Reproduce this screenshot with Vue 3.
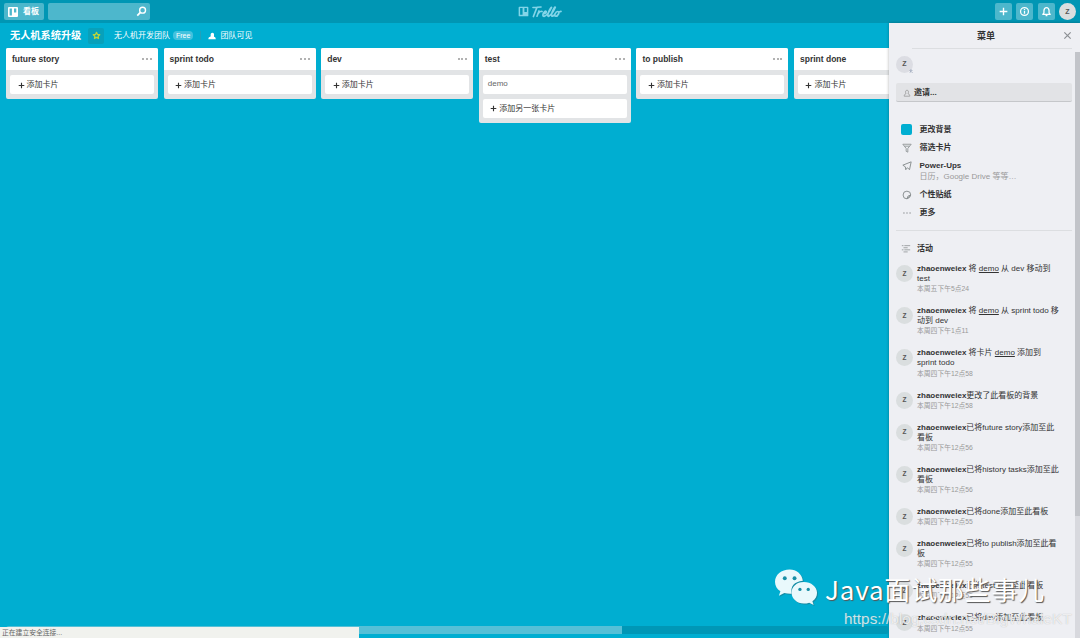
<template>
  <div class="app">
    <header class="topbar">
      <div class="boards-btn">
        <svg class="board-icon" viewBox="0 0 12 12">
          <path fill-rule="evenodd" fill="#fff" d="M2 1h8a1 1 0 0 1 1 1v8a1 1 0 0 1-1 1H2a1 1 0 0 1-1-1V2a1 1 0 0 1 1-1zM2.6 2.5v7h2.300v-7zM7 2.500v4h2.300v-4z" />
        </svg>
        <span>看板</span>
      </div>
      <div class="search">
        <svg viewBox="0 0 12 12" fill="none" stroke="#fff" stroke-width="1.5">
          <circle cx="7.2" cy="4.6" r="3.2" />
          <path d="M4.8 7 1.4 10.5" stroke-width="1.9" />
        </svg>
      </div>
      <div class="logo">
        <svg viewBox="0 0 12 12">
          <path fill-rule="evenodd" fill="#82d5e8" d="M1.5.7h9a.8.8 0 0 1 .8.8v9a.8.8 0 0 1-.8.8h-9a.8.8 0 0 1-.8-.8v-9a.8.8 0 0 1 .8-.8zM2.300 2.200v7.400h2.700V2.200zM7 2.200v4.400h2.700V2.200z" />
        </svg>
        <svg class="wordmark" viewBox="0 0 32 14" fill="none" stroke="#82d5e8" stroke-width="1.7" stroke-linecap="round" stroke-linejoin="round">
          <path d="M3 2.5 11 2M7 2.3 3.4 11.5M9 6 7 11.2M8.2 8.5Q10.5 5.5 12 6.5M13 9Q17 8 16 6.3C14.5 5 11.2 11.5 14 11.4Q18 10 21.5 2.5C21 1.5 15.7 11.4 18.7 11.3Q22.5 9 25.3 2.2C24.5 1 19.5 11.3 22.5 11.2Q24 11 25 9C26.5 5.3 30 6 28.5 9C27 12 24 12 25 9M28.8 7 31 6.4" />
        </svg>
      </div>
      <div class="actions">
        <span class="action">
          <svg viewBox="0 0 12 12" fill="none" stroke="#fff" stroke-width="1.5"><path d="M6 1.8v8.4M1.8 6h8.4" /></svg>
        </span>
        <span class="action">
          <svg viewBox="0 0 12 12" fill="none" stroke="#fff" stroke-width="1.4"><circle cx="6" cy="6" r="4.3" /><path d="M6 5.4v3M6 3.3v1.2" /></svg>
        </span>
        <span class="action">
          <svg viewBox="0 0 12 12" fill="none" stroke="#fff" stroke-width="1.4" stroke-linejoin="round"><path d="M2 9.2h8L8.800 7.500V5Q8.500 1.800 6 1.800T3.200 5v2.500zM5 10.6h2" /></svg>
        </span>
        <span class="avatar top">Z</span>
      </div>
    </header>

    <div class="board-header">
      <span class="board-name">无人机系统升级</span>
      <span class="star">
        <svg viewBox="0 0 12 12" fill="none" stroke="#b9d43c" stroke-width="1.7" stroke-linejoin="round"><path d="m6 1.8 1.3 2.8 3 .4-2.2 2 .6 3L6 8.5 3.300 10l.6-3-2.200-2 3-.4z" /></svg>
      </span>
      <span class="team">无人机开发团队</span>
      <span class="free">Free</span>
      <span class="divider"></span>
      <svg class="team-icon" viewBox="0 0 10 10" fill="#fff"><path d="M.5 9c0-2 .6-2.600 2.500-3L3.400 4.500C3 2 4 1 5.500 1s2.500 1.200 2 3.500L7.500 6C9 6.500 9.700 7 9.700 9z" /></svg>
      <span>团队可见</span>
    </div>

    <main class="lists">
      <section class="list" v-for="list in lists" :key="list.name">
        <div class="list-header">
          <span>{{ list.name }}</span>
          <span class="dots"><i></i><i></i><i></i></span>
        </div>
        <div class="list-body">
          <div class="card" v-for="card in list.cards" :key="card">{{ card }}</div>
          <div class="add-card">
            <svg viewBox="0 0 8 8" stroke="#333" stroke-width="1.3"><path d="M4 .8v6.400M.8 4h6.400" /></svg>
            <span>{{ list.cards.length ? '添加另一张卡片' : '添加卡片' }}</span>
          </div>
        </div>
      </section>
    </main>

    <aside class="menu">
      <div class="menu-header">
        <span>菜单</span>
        <svg class="close" viewBox="0 0 10 10" stroke="#8b8f93" stroke-width="1.3"><path d="m1.500 1.500 7 7m0-7-7 7" /></svg>
      </div>
      <div class="members">
        <span class="avatar member">
          Z
          <svg viewBox="0 0 6 6" fill="none" stroke="#6a7a99"><path d="m1 3 2-2 2 2M1 5.500l2-2 2 2" /></svg>
        </span>
      </div>
      <div class="invite">
        <svg viewBox="0 0 10 10" fill="none" stroke="#999" stroke-width="1"><path d="M1.500 9c0-2 .8-2.600 2.200-3C2.500 3 3.500 1.500 5 1.500S7.500 3 6.300 6C7.700 6.400 8.500 7 8.500 9z" /></svg>
        <span>邀请...</span>
      </div>
      <ul class="nav">
        <li><span class="swatch"></span><b>更改背景</b></li>
        <li>
          <svg viewBox="0 0 12 12" fill="none" stroke="#929798" stroke-width="1.100"><path d="M1 1.500h10L7 6.500V11L5 10V6.500zM3 3.800h6" /></svg>
          <b>筛选卡片</b>
        </li>
        <li class="powerups">
          <svg viewBox="0 0 12 12" fill="none" stroke="#8c9293" stroke-width="1.200" stroke-linejoin="round"><path d="M11 1 9 10.500 6.500 8 4.500 10.500 4 7 1 5z" /></svg>
          <div><b>Power-Ups</b><small>日历，Google Drive 等等…</small></div>
        </li>
        <li>
          <svg viewBox="0 0 12 12" fill="none" stroke="#8c9293" stroke-width="1.200"><path d="M10.500 6A4.600 4.600 0 1 0 6 10.600Q6 6.500 10.500 6L6 10.600M10.500 6Q10 9.500 6 10.600" /></svg>
          <b>个性贴纸</b>
        </li>
        <li>
          <svg viewBox="0 0 12 12" fill="#929798"><circle cx="2.300" cy="6" r=".9" /><circle cx="6" cy="6" r=".9" /><circle cx="9.700" cy="6" r=".9" /></svg>
          <b>更多</b>
        </li>
      </ul>
      <div class="activity-title">
        <svg viewBox="0 0 12 12" stroke="#909596" stroke-width="1"><path d="M1 2h2m1 0h7M3 4.500h5M1 7h2m1 0h7M3 9.500h5" /></svg>
        <span>活动</span>
      </div>
      <div class="feed">
        <div class="entry" v-for="(item, i) in activities" :key="i">
          <span class="avatar">Z</span>
          <div class="entry-text">
            <p v-for="(line, n) in item.lines" :key="n">
              <b v-if="n === 0">zhaoenweiex</b><template v-for="(part, k) in line.split('|')" :key="k"><u v-if="k === 1">{{ part }}</u><template v-else>{{ part }}</template></template>
            </p>
            <time>{{ item.time }}</time>
          </div>
        </div>
      </div>
      <div class="scrollbar"></div>
    </aside>

    <div class="h-scroll"></div>
    <div class="status">正在建立安全连接...</div>

    <div class="watermark">
      <svg viewBox="0 0 44 38">
        <path fill="#e9f9fc" d="M15 1C6.500 1 0 6.500 0 13.500c0 4 2 7.500 5.500 9.800L4 28l5.500-2.800q3.500 1 7.500.8Q15 14 28.500 12.500C27.500 5.500 22 1 15 1z" />
        <path fill="#e9f9fc" d="M29.500 14C22 14 17 19 17 25s5.500 11 12.500 11q3 0 5.500-1l4.500 2.500-1.200-4C41.500 31.500 43 28.500 43 25c0-6-6-11-13.500-11z" />
        <g fill="#198fa6"><circle cx="10" cy="10" r="2" /><circle cx="20" cy="10" r="2" /><circle cx="25.500" cy="21.500" r="1.700" /><circle cx="34" cy="21.500" r="1.700" /></g>
      </svg>
      <span>Java面试那些事儿</span>
    </div>
    <div class="watermark-url">https://blog.csdn.net/BigWhaleKT</div>
  </div>
</template>

<script setup>
const lists = [
  { name: 'future story', cards: [] },
  { name: 'sprint todo', cards: [] },
  { name: 'dev', cards: [] },
  { name: 'test', cards: ['demo'] },
  { name: 'to publish', cards: [] },
  { name: 'sprint done', cards: [] }
]

// the part between bars is the linked card
const activities = [
  { lines: [' 将 |demo| 从 dev 移动到', 'test'], time: '本周五下午5点24' },
  { lines: [' 将 |demo| 从 sprint todo 移', '动到 dev'], time: '本周四下午1点11' },
  { lines: [' 将卡片 |demo| 添加到', 'sprint todo'], time: '本周四下午12点58' },
  { lines: ['更改了此看板的背景'], time: '本周四下午12点58' },
  { lines: ['已将future story添加至此', '看板'], time: '本周四下午12点56' },
  { lines: ['已将history tasks添加至此', '看板'], time: '本周四下午12点56' },
  { lines: ['已将done添加至此看板'], time: '本周四下午12点55' },
  { lines: ['已将to publish添加至此看', '板'], time: '本周四下午12点55' },
  { lines: ['已将test添加至此看板'], time: '本周四下午12点55' },
  { lines: ['已将dev添加至此看板'], time: '本周四下午12点55' }
]
</script>

<style>
body {
  margin: 0;
  overflow: hidden;
}
</style>

<style scoped>
* {
  box-sizing: border-box;
}

.app {
  position: relative;
  width: 1080px;
  height: 638px;
  overflow: hidden;
  background: #00aed1;
  color: #333;
  font: 8px/10px "Liberation Sans", "Noto Sans CJK SC", sans-serif;
}

svg {
  display: block;
  flex: none;
}

.topbar {
  display: flex;
  align-items: center;
  height: 23px;
  padding: 0 4px;
  background: #0096b4;
}

.boards-btn,
.search {
  display: flex;
  align-items: center;
  height: 17px;
  border-radius: 2px;
  background: #4db7cc;
}

.boards-btn {
  gap: 4px;
  width: 40px;
  padding-left: 3px;
  color: #fff;
  font-weight: bold;
}

.boards-btn svg {
  width: 12px;
  height: 12px;
}

.search {
  justify-content: flex-end;
  width: 102px;
  margin-left: 4px;
  padding-right: 3px;
}

.search svg {
  width: 11px;
  height: 11px;
}

.logo {
  display: flex;
  align-items: center;
  gap: 1px;
  margin-left: 368px;
}

.logo svg {
  width: 11px;
  height: 11px;
}

.logo .wordmark {
  width: 32px;
  height: 14px;
}

.actions {
  display: flex;
  align-items: center;
  gap: 4.5px;
  margin-left: auto;
}

.action {
  display: flex;
  align-items: center;
  justify-content: center;
  width: 17px;
  height: 17px;
  border-radius: 2px;
  background: #4db7cc;
}

.action svg {
  width: 11px;
  height: 11px;
}

.avatar {
  display: flex;
  flex: none;
  align-items: center;
  justify-content: center;
  width: 17px;
  height: 17px;
  border-radius: 50%;
  background: #dadedf;
  color: #555;
  font-size: 7px;
  font-weight: bold;
}

.board-header {
  display: flex;
  align-items: center;
  height: 25px;
  padding-left: 10px;
  color: #fff;
}

.board-name {
  width: 72px;
  font-size: 10.2px;
  font-weight: bold;
  white-space: nowrap;
}

.star {
  display: flex;
  align-items: center;
  justify-content: center;
  width: 16px;
  height: 16px;
  margin-left: 6px;
  border-radius: 2px;
  background: #08a0ba;
}

.star svg {
  width: 9px;
  height: 9px;
}

.team {
  margin-left: 10px;
}

.free {
  margin-left: 3px;
  padding: 0 3px;
  border-radius: 4px;
  background: #42c2de;
  font-size: 7px;
  line-height: 9px;
}

.divider {
  width: 1px;
  height: 9px;
  margin: 0 7px;
  background: #22a0b9;
}

.team-icon {
  width: 8px;
  height: 8px;
  margin-right: 4px;
}

.lists {
  display: flex;
  align-items: flex-start;
  gap: 5.6px;
  padding-left: 6px;
}

.list {
  flex: none;
  width: 152px;
  border-radius: 2px;
  background: #e2e4e6;
  overflow: hidden;
}

.list-header {
  display: flex;
  align-items: center;
  justify-content: space-between;
  height: 22px;
  padding: 0 6px;
  background: #fff;
  font-size: 8.5px;
  font-weight: bold;
}

.dots {
  display: flex;
  gap: 1.8px;
}

.dots i {
  width: 2px;
  height: 2px;
  border-radius: 50%;
  background: #999;
}

.list-body {
  display: flex;
  flex-direction: column;
  gap: 5px;
  padding: 5px 4px;
}

.card,
.add-card {
  display: flex;
  align-items: center;
  height: 18.500px;
  border-radius: 2px;
  background: #fff;
}

.card {
  padding-left: 5px;
  color: #666;
}

.add-card {
  gap: 2px;
  height: 19px;
  padding: 1px 0 0 7.5px;
}

.add-card svg {
  width: 7px;
  height: 7px;
}

/* slides over the board */
.menu {
  position: absolute;
  top: 23px;
  right: 0;
  bottom: 0;
  width: 191px;
  padding: 0 8px 0 7px;
  background: #eeeff3;
  box-shadow: 0 0 3px rgba(0, 0, 0, 0.3);
}

.menu-header {
  display: flex;
  align-items: center;
  justify-content: center;
  height: 26px;
  margin-left: 16px;
  border-bottom: 1px solid #dcdee1;
  font-size: 9px;
  font-weight: bold;
}

.menu-header span {
  margin-left: auto;
  padding-left: 4px;
}

.close {
  width: 9px;
  height: 9px;
  margin-left: 68px;
}

.members {
  display: flex;
  align-items: center;
  height: 30px;
}

.member {
  position: relative;
  background: #dcdde3;
}

.member svg {
  position: absolute;
  right: 0;
  bottom: 0;
  width: 4px;
  height: 4px;
}

.invite {
  display: flex;
  align-items: center;
  gap: 3px;
  height: 19px;
  margin-top: 4px;
  padding: 1px 0 0 7px;
  border-bottom: 1px solid #c5c7ca;
  border-radius: 2px;
  background: #e2e3e6;
  font-weight: bold;
}

.invite svg {
  width: 8px;
  height: 8px;
}

.nav {
  display: flex;
  flex-direction: column;
  height: 129px;
  margin: 0;
  padding: 18.5px 0 0 5px;
  border-bottom: 1px solid #dcdee1;
  list-style: none;
}

.nav li {
  display: flex;
  align-items: center;
  gap: 7.5px;
  height: 18px;
}

.nav svg {
  width: 10px;
  height: 10px;
  margin: 0 0.5px;
}

.swatch {
  width: 11px;
  height: 11px;
  border-radius: 2px;
  background: #00aed1;
}

.nav .powerups {
  align-items: flex-start;
  height: 29px;
  padding-top: 4px;
}

.nav small {
  display: block;
  margin-top: 1.5px;
  color: #999;
  font-size: 8px;
}

.nav b {
  display: block;
}

.activity-title {
  display: flex;
  align-items: center;
  gap: 6px;
  height: 33px;
  padding: 3px 0 0 5px;
  font-weight: bold;
}

.activity-title svg {
  width: 10px;
  height: 10px;
}

.entry {
  display: flex;
  align-items: flex-start;
  gap: 4px;
  padding-bottom: 12px;
}

.entry .avatar {
  margin-top: 1px;
  font-size: 6.5px;
}

.entry p {
  height: 10.1px;
  margin: 0;
  white-space: nowrap;
}

.entry time {
  display: block;
  height: 10px;
  color: #999;
  font-size: 6.8px;
  white-space: nowrap;
}

.scrollbar {
  position: absolute;
  top: 29px;
  right: 0;
  bottom: 0;
  width: 5px;
  background: linear-gradient(#c2c4c9 464px, #d8d9de 464px);
}

.h-scroll {
  position: absolute;
  left: 6px;
  top: 625.5px;
  width: 883px;
  height: 8px;
  border-radius: 3px;
  background: linear-gradient(90deg, #55c0d7 616px, #0097b6 616px);
}

.status {
  position: absolute;
  left: 0;
  bottom: 0;
  width: 358.5px;
  height: 11px;
  padding-left: 2px;
  background: #f1f2ee;
  color: #666;
  font-size: 6.8px;
  line-height: 11px;
}

.watermark {
  position: absolute;
  left: 775px;
  top: 567px;
  display: flex;
  align-items: flex-start;
  gap: 7px;
  color: #fff;
  font: 26px/44px "Noto Sans CJK SC", sans-serif;
  letter-spacing: 0.8px;
  text-shadow: 1px 1px 1px #555;
  white-space: nowrap;
}

.watermark svg {
  width: 43px;
  height: 38px;
  margin-top: 1px;
  filter: drop-shadow(1px 1px 0 #168ba3);
}

.watermark-url {
  position: absolute;
  left: 844px;
  top: 609px;
  color: rgba(255, 255, 255, 0.75);
  font: 15.4px/20px "Liberation Sans", sans-serif;
  text-shadow: 0 0 1px rgba(120, 120, 120, 0.5);
  white-space: nowrap;
}
</style>
